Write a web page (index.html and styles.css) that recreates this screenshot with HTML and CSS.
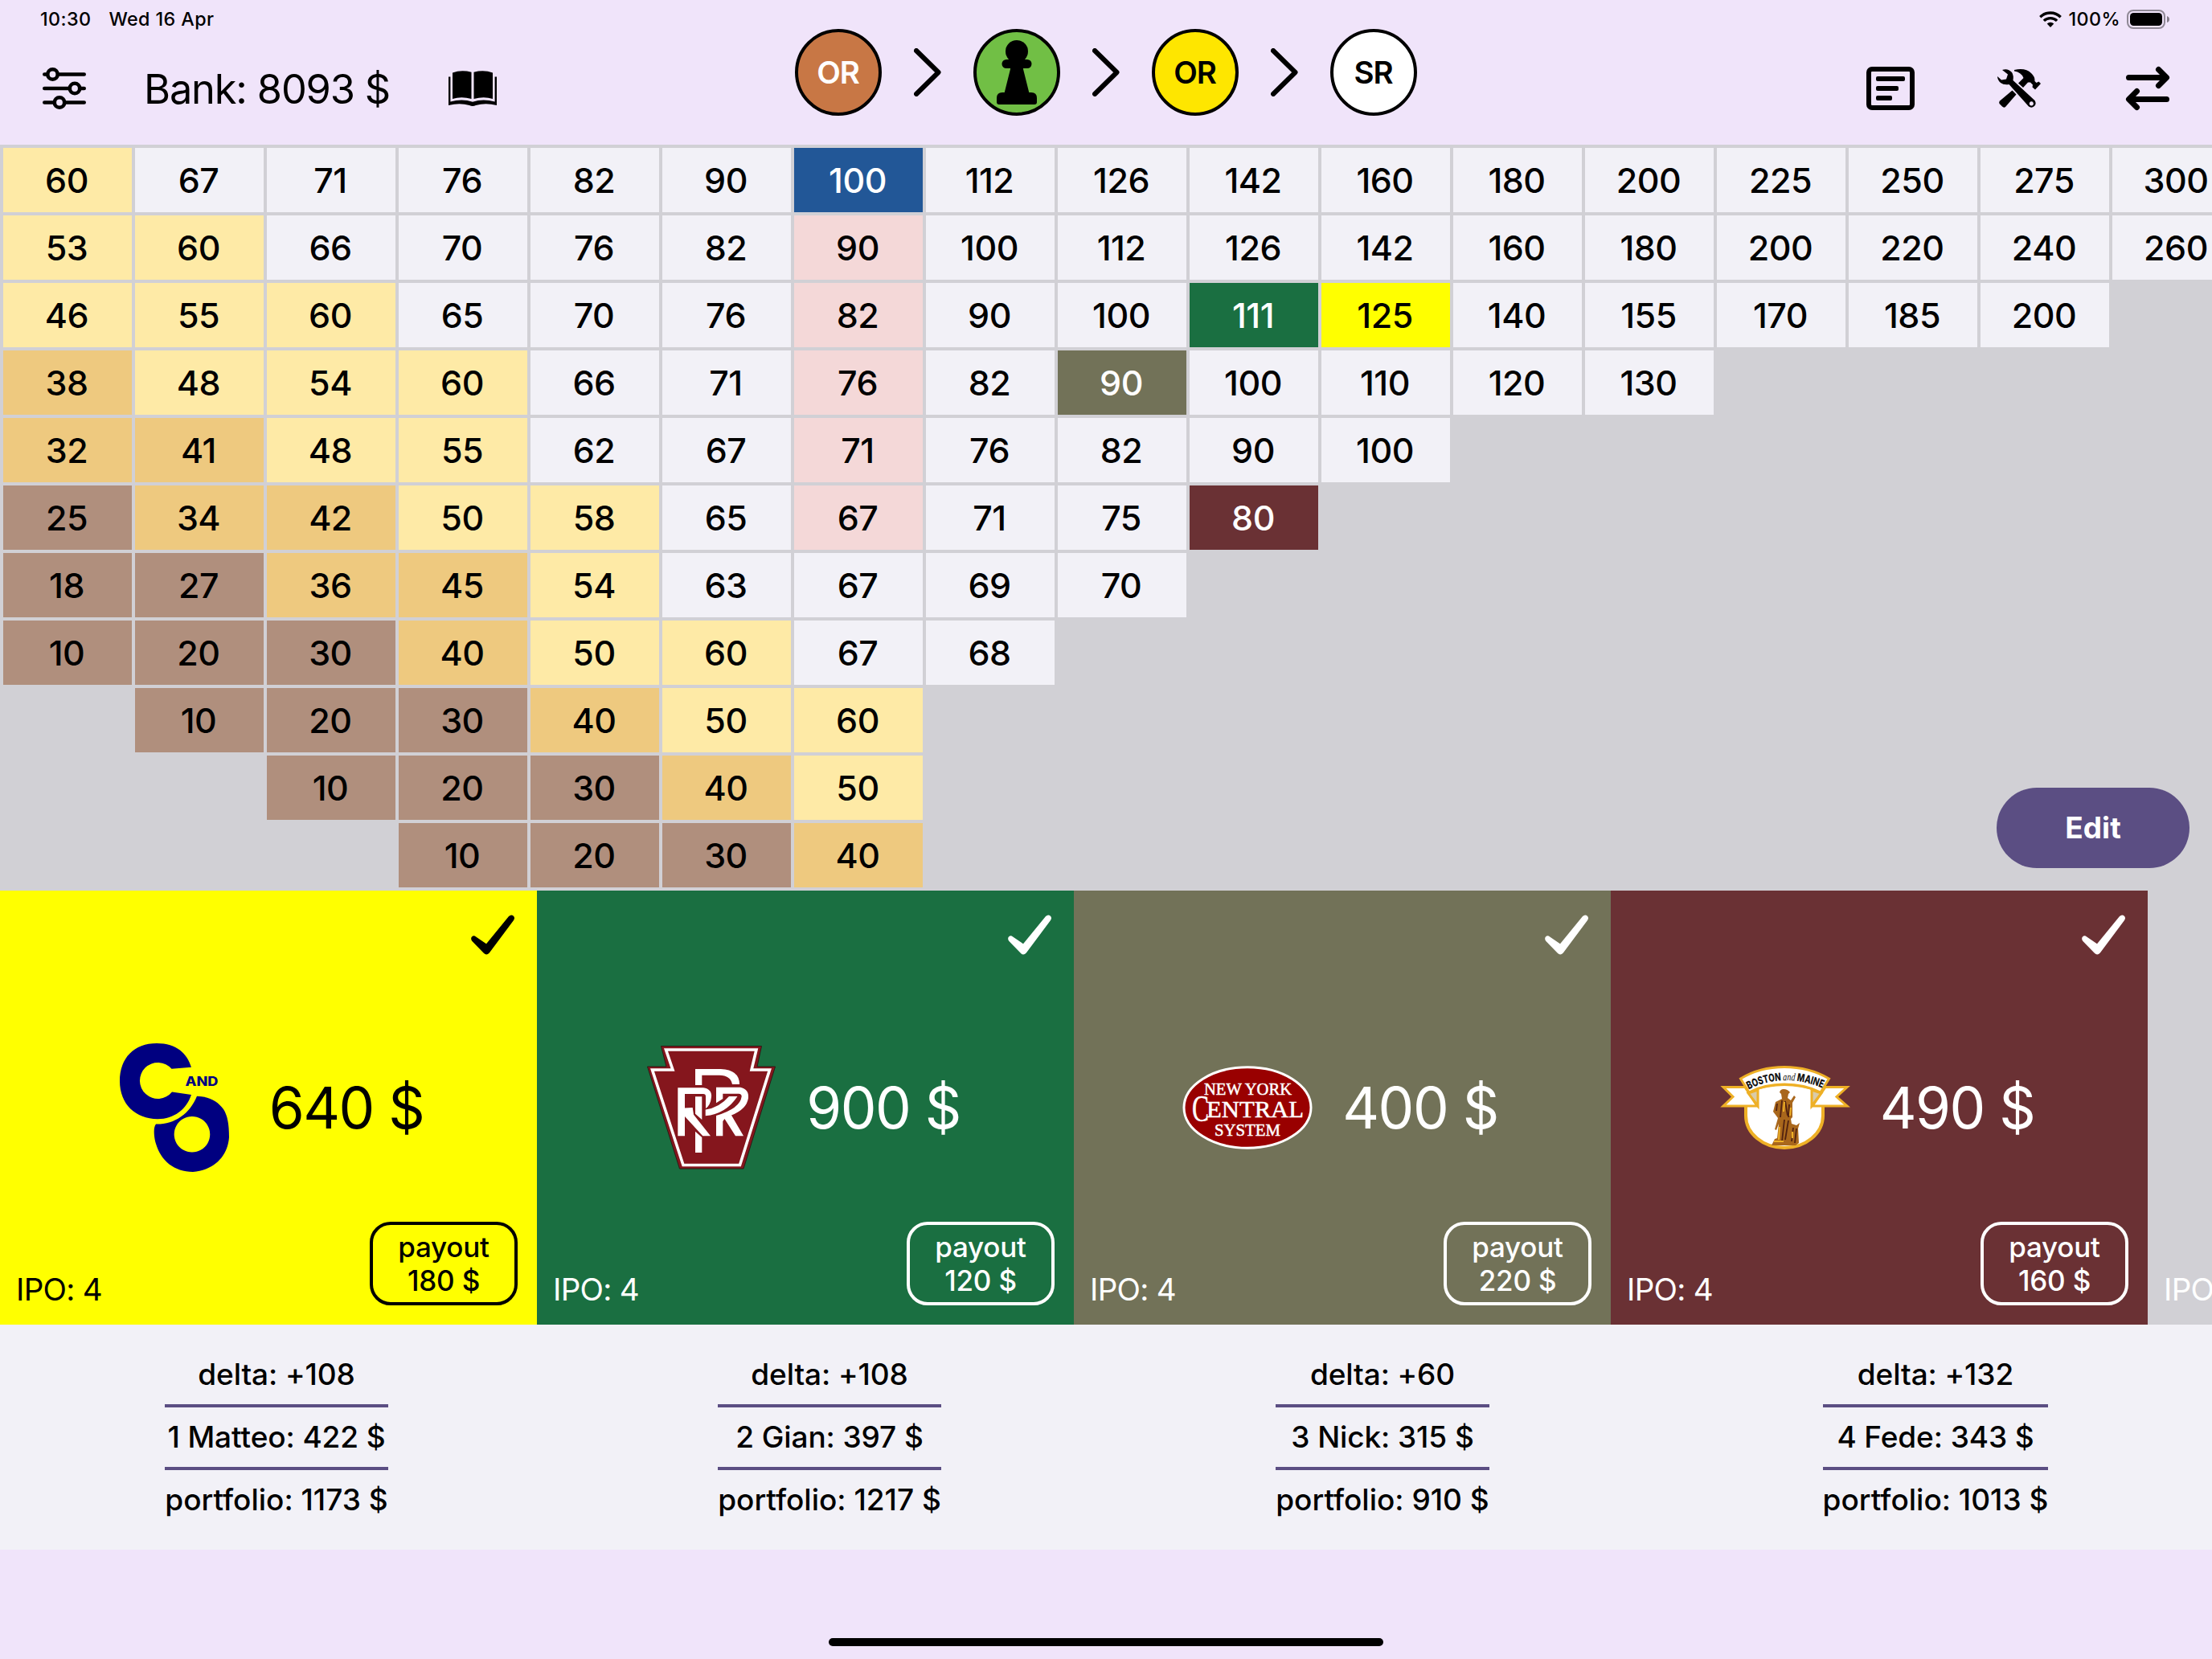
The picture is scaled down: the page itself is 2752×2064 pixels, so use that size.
FILE: index.html
```html
<!DOCTYPE html>
<html lang="en">
<head>
<meta charset="utf-8">
<title>Bank</title>
<link rel="stylesheet" href="styles.css">
</head>
<body>
<svg class="defs" width="0" height="0">
  <symbol id="check" viewBox="0 0 54 50"><path d="M6.2 27.6 L19 36.3 L47 2 Q50 -1 53 1.8 Q55 4 53 7 L22.8 47.5 Q19.300 51.500 15.800 47.800 L1.200 32.700 Q-0.800 29.800 1 27.500 Q3.400 25 6.200 27.600 Z" fill="currentColor"/></symbol>
  <symbol id="chevron" viewBox="0 0 34 60"><path d="M3 3 L30.500 30 L3 57" fill="none" stroke="#000" stroke-width="6" stroke-linecap="round" stroke-linejoin="round"/></symbol>
</svg>

<header class="topbar">
  <div class="status">
    <div class="status-side"><span class="time">10:30</span><span class="date">Wed 16 Apr</span></div>
    <div class="status-side">
      <svg class="wifi" viewBox="0 0 28 20"><g fill="none" stroke="#000" stroke-width="3.4"><path d="M1.300 7.200 A18.200 18.200 0 0 1 26.700 7.200"/><path d="M5.900 11.900 A11.600 11.600 0 0 1 22.100 11.900"/></g><path d="M14 20 L9.700 15.600 A6.200 6.200 0 0 1 18.300 15.600 Z"/></svg>
      <span class="pct">100%</span>
      <svg class="battery" viewBox="0 0 54 24"><rect x="1" y="1" width="46" height="22" rx="7" fill="none" stroke="#000" stroke-opacity=".4" stroke-width="2"/><rect x="4" y="4" width="40" height="16" rx="4.500"/><path d="M50 8 Q53 9 53 12 Q53 15 50 16 Z" fill-opacity=".45"/></svg>
    </div>
  </div>
  <div class="tools">
    <div class="tools-left">
      <svg class="sliders" viewBox="0 0 54 52"><g fill="none" stroke="#000" stroke-width="4.600" stroke-linecap="round"><path d="M2.300 8.500H5M20 8.500H51.700M2.300 26H33M48 26H51.700M2.300 43.500H14M28 43.500H51.700"/><circle cx="12.500" cy="8.500" r="6.200"/><circle cx="40" cy="26" r="6.200"/><circle cx="21" cy="43.500" r="6.200"/></g></svg>
      <span class="bank">Bank: 8093 $</span>
      <svg class="book" viewBox="0 0 60 44"><path d="M5 2.500 Q16 -1.500 28.500 1.800 V35 Q16 31.500 5 35 Z"/><path d="M55 2.500 Q44 -1.500 31.500 1.800 V35 Q44 31.500 55 35 Z"/><path d="M0 7.500 H2.400 V38.600 Q17 34.500 30 38.800 Q43 34.500 57.600 38.600 V7.500 H60 V43 Q46 39.500 34 43 Q30 44.800 26 43 Q14 39.500 0 43 Z"/></svg>
    </div>
    <div class="rounds">
      <div class="round r-brown">OR</div>
      <svg class="chev"><use href="#chevron"/></svg>
      <div class="round r-green"><svg class="pawn" viewBox="0 0 50 80"><ellipse cx="25" cy="14" rx="14" ry="14"/><rect x="6.500" y="24" width="37" height="11" rx="5.500"/><path d="M18 24 H32 L33 36 L40.500 66 H9.500 L17 36 Z"/><path d="M0 77 V72 Q0 65 7 65 H43 Q50 65 50 72 V77 Q50 80 47 80 H3 Q0 80 0 77 Z"/></svg></div>
      <svg class="chev"><use href="#chevron"/></svg>
      <div class="round r-yellow">OR</div>
      <svg class="chev"><use href="#chevron"/></svg>
      <div class="round r-white">SR</div>
    </div>
    <div class="tools-right">
      <svg class="note" viewBox="0 0 60 54"><rect x="3" y="3" width="54" height="48" rx="4" fill="none" stroke="#000" stroke-width="6"/><rect x="12" y="12" width="36" height="6" rx="2"/><rect x="12" y="24" width="28" height="6" rx="2"/><rect x="12" y="36" width="20" height="6" rx="2"/></svg>
      <svg class="wrench" viewBox="0 0 54 48"><path d="M21 1 Q35 -2 42 5 Q47 9.500 46.500 15 L48.500 17 L51.500 15.500 L54 18 L47 25.500 L43.500 22.500 L44 19.500 L41 16.500 L38 16.500 L32 23 L26 17.500 L32.500 11 Q30 4 21 2.500 Z"/><path d="M18.500 26.500 L23.500 31.500 L10 47 Q8 48.500 6 46.500 L2.500 43 Q1.500 41 3 39.500 Z"/><path fill-rule="evenodd" d="M6 1 Q13 -1.500 18 4 Q20.500 8 19.500 14 L46.500 39 Q49 43 46 46 Q42.500 49 39 46.500 L14.500 19 Q8 20 4 17 Q0 13.500 0 9 L5 13.500 L11 12.500 L13 6.500 Z M42.300 40.300 a2.600 2.600 0 1 0 .1 0 Z"/></svg>
      <svg class="swap" viewBox="0 0 54 54"><g fill="none" stroke="#000" stroke-width="7" stroke-linecap="round" stroke-linejoin="round"><path d="M3.500 13.500H50M40.500 3.500L50.500 13.500L40.500 23.500M50.500 40.500H4M13.500 30.500L3.500 40.500L13.500 50.500"/></g></svg>
    </div>
  </div>
</header>

<main class="market">
  <div class="row"><i class="y">60</i><i>67</i><i>71</i><i>76</i><i>82</i><i>90</i><i class="bo">100</i><i>112</i><i>126</i><i>142</i><i>160</i><i>180</i><i>200</i><i>225</i><i>250</i><i>275</i><i>300</i></div>
  <div class="row"><i class="y">53</i><i class="y">60</i><i>66</i><i>70</i><i>76</i><i>82</i><i class="par">90</i><i>100</i><i>112</i><i>126</i><i>142</i><i>160</i><i>180</i><i>200</i><i>220</i><i>240</i><i>260</i></div>
  <div class="row"><i class="y">46</i><i class="y">55</i><i class="y">60</i><i>65</i><i>70</i><i>76</i><i class="par">82</i><i>90</i><i>100</i><i class="prr">111</i><i class="co">125</i><i>140</i><i>155</i><i>170</i><i>185</i><i>200</i></div>
  <div class="row"><i class="o">38</i><i class="y">48</i><i class="y">54</i><i class="y">60</i><i>66</i><i>71</i><i class="par">76</i><i>82</i><i class="nyc">90</i><i>100</i><i>110</i><i>120</i><i>130</i></div>
  <div class="row"><i class="o">32</i><i class="o">41</i><i class="y">48</i><i class="y">55</i><i>62</i><i>67</i><i class="par">71</i><i>76</i><i>82</i><i>90</i><i>100</i></div>
  <div class="row"><i class="b">25</i><i class="o">34</i><i class="o">42</i><i class="y">50</i><i class="y">58</i><i>65</i><i class="par">67</i><i>71</i><i>75</i><i class="bm">80</i></div>
  <div class="row"><i class="b">18</i><i class="b">27</i><i class="o">36</i><i class="o">45</i><i class="y">54</i><i>63</i><i>67</i><i>69</i><i>70</i></div>
  <div class="row"><i class="b">10</i><i class="b">20</i><i class="b">30</i><i class="o">40</i><i class="y">50</i><i class="y">60</i><i>67</i><i>68</i></div>
  <div class="row"><i class="none"></i><i class="b">10</i><i class="b">20</i><i class="b">30</i><i class="o">40</i><i class="y">50</i><i class="y">60</i></div>
  <div class="row"><i class="none"></i><i class="none"></i><i class="b">10</i><i class="b">20</i><i class="b">30</i><i class="o">40</i><i class="y">50</i></div>
  <div class="row"><i class="none"></i><i class="none"></i><i class="none"></i><i class="b">10</i><i class="b">20</i><i class="b">30</i><i class="o">40</i></div>
  <button class="edit">Edit</button>
</main>

<section class="companies">
  <article class="card co">
    <svg class="tick"><use href="#check"/></svg>
    <div class="value">
      <svg class="logo" viewBox="0 0 160 160"><g fill="#000080"><path d="M101 29.800 C96 13 83 0 58 0 C30 0 12 18 12 47 C12 76 32 94 59 94.300 C80 94 95 82 101 64 L77 60.500 A22.500 22.500 0 1 1 76.500 31.800 Z"/><path fill-rule="evenodd" d="M108 65.700 C99 88 80 101 57 100.500 C53 105 55 119 57 125 C63 146 80 160 103 160 C128 158 146 142 148 117 C148 100 146 90 141 82 C134 72 123 66 108 65.700 Z M102 91 a22.300 22.300 0 1 1 -.1 0 Z"/><text x="93.500" y="53" textLength="41" lengthAdjust="spacingAndGlyphs" font-size="15.500" font-weight="800">AND</text></g></svg>
      <span class="amount">640 $</span>
    </div>
    <div class="foot"><span class="ipo">IPO: 4</span><span class="payout">payout<br>180 $</span></div>
  </article>
  <article class="card prr">
    <svg class="tick"><use href="#check"/></svg>
    <div class="value">
      <svg class="logo" viewBox="0 0 160 160"><path d="M17.500 3.500H142.500L137 29H159.500L120 156H40.500L.500 29H24Z" fill="#85161d" stroke="#2d1a16"/><path d="M23.500 8H136L130 33H152.500L115.500 151.500H45L6.500 33H32Z" fill="none" stroke="#fff" stroke-width="3.600"/>
      <g fill="#fff">
        <path d="M60 32H91.700Q115 33 115 51H106Q104 40 90 39.700H68.300V52H60Z"/>
        <path d="M38.300 55.300H70Q81 57 80 67Q79 77 73 81V66Q73 63 70 63H47V80.500L56.700 80L58 88.700L79 115.300H69.300L47 91V115.300H38.300Z"/>
        <path d="M60 66.300H68.300V95L60 87.700Z"/>
        <path d="M60 109.700L68.300 117V136H60Z"/>
        <path d="M72.700 90.300V82.500Q90 80 102 66H112.500Q98 88 72.700 90.300Z"/>
        <path d="M86 54.700H116Q127 57 126 68Q124 82 105 89.500L120 115.300H110L96.500 94L94.300 97V115.300H86V90Q116 81 117.700 66Q117.700 63 114 62.700H94.300V69L86 74.300Z"/>
      </g></svg>
      <span class="amount">900 $</span>
    </div>
    <div class="foot"><span class="ipo">IPO: 4</span><span class="payout">payout<br>120 $</span></div>
  </article>
  <article class="card nyc">
    <svg class="tick"><use href="#check"/></svg>
    <div class="value">
      <svg class="logo" viewBox="0 0 160 160"><ellipse cx="80" cy="80" rx="79" ry="50.300" fill="#900" stroke="#fff" stroke-width="3"/><g class="serif"><text x="26" y="64" font-size="21" textLength="109" lengthAdjust="spacingAndGlyphs">NEW YORK</text><text x="11" y="97" font-size="46" textLength="21" lengthAdjust="spacingAndGlyphs">C</text><text x="29" y="92" font-size="28.500" textLength="121" lengthAdjust="spacingAndGlyphs">ENTRAL</text><text x="39" y="115" font-size="21" textLength="82" lengthAdjust="spacingAndGlyphs">SYSTEM</text></g></svg>
      <span class="amount">400 $</span>
    </div>
    <div class="foot"><span class="ipo">IPO: 4</span><span class="payout">payout<br>220 $</span></div>
  </article>
  <article class="card bm">
    <svg class="tick"><use href="#check"/></svg>
    <div class="value">
      <svg class="logo" viewBox="0 0 160 160"><path d="M31 78V90A48 40 0 0 0 127 90V78L120 58Q79 44 38 58Z" fill="#fff" stroke="#eeb026" stroke-width="4"/><path d="M3 54.500H30L45 78H3L15 66.500ZM157 54.500H130L114 78H157L144 66.500Z" fill="#fff" stroke="#eeb026" stroke-width="3"/><path d="M34 62L46 58V78ZM125 62L113 58V78Z" fill="#d9cba8" stroke="#eeb026" stroke-width="3"/><path d="M24.500 44Q48 29.500 79 29.500Q110 29.500 134.500 44L124 61Q104 51 79 51Q54 51 35 61Z" fill="#fff" stroke="#eeb026" stroke-width="3"/>
      <path id="arc" d="M34.500 57.500Q80 34.500 132 58" fill="none"/><text font-size="13.500" font-weight="800" textLength="95" lengthAdjust="spacingAndGlyphs" class="ink"><textPath href="#arc">BOSTON <tspan font-style="italic" font-weight="500" font-family="Liberation Serif, serif">and</tspan> MAINE</textPath></text>
      <path d="M73 61Q74 57 78 57Q83 57 86 61L84 63L83 68L87 71L91 65L93 67L89 74V92L87 94L88 100L94 102L98 99L96 106L97 124L93 127H63L67 119L70 118L72 100L69 108L67 107L71 93L65 85L68 73L76 69L75 63Z" fill="#a9671c"/><path d="M76 71L74 92M80 72L83 90M85 76L84 92M79 95L76 122M84 96L80 120M90 105L88 122M94 106L92 124M70 75L69 84" stroke="#512210" stroke-width="1.800" fill="none"/><path d="M79 73L78 85M87 80L86 90M73 104L72 120M66 122H78M89 110V118" stroke="#eeb026" stroke-width="2" fill="none"/></svg>
      <span class="amount">490 $</span>
    </div>
    <div class="foot"><span class="ipo">IPO: 4</span><span class="payout">payout<br>160 $</span></div>
  </article>
  <article class="card next">
    <div class="foot"><span class="ipo">IPO: 4</span></div>
  </article>
</section>

<section class="players">
  <div class="player"><div class="lines"><span>delta: +108</span><span>1 Matteo: 422 $</span><span>portfolio: 1173 $</span></div></div>
  <div class="player"><div class="lines"><span>delta: +108</span><span>2 Gian: 397 $</span><span>portfolio: 1217 $</span></div></div>
  <div class="player"><div class="lines"><span>delta: +60</span><span>3 Nick: 315 $</span><span>portfolio: 910 $</span></div></div>
  <div class="player"><div class="lines"><span>delta: +132</span><span>4 Fede: 343 $</span><span>portfolio: 1013 $</span></div></div>
</section>
<footer class="home"><span class="home-bar"></span></footer>
</body>
</html>
```

FILE: styles.css
```css
* { box-sizing: border-box; }
body {
  margin: 0;
  width: 2752px;
  height: 2064px;
  overflow: hidden;
  display: flex;
  flex-direction: column;
  background: #f0e4fa;
  color: #000;
  font-family: Inter, "Liberation Sans", sans-serif;
}
svg { display: block; flex: none; overflow: visible; }
.defs { position: absolute; }

/* top bar */
.topbar { height: 180px; flex: none; }
.status {
  height: 48px;
  display: flex;
  justify-content: space-between;
  padding: 0 52px 0 50px;
  font-size: 23.300px;
  font-weight: 500;
  line-height: 48px;
  letter-spacing: .4px;
}
.status-side { display: flex; align-items: center; }
.date { margin-left: 22px; }
.wifi { width: 28px; height: 20px; }
.pct { margin: 0 8px 0 9px; }
.battery { width: 54px; height: 24px; }
.tools {
  height: 132px;
  display: grid;
  grid-template-columns: 989px 774px 989px;
}
.tools-left, .tools-right { display: flex; align-items: center; height: 124px; }
.tools-left { padding-left: 53px; }
.sliders { width: 54px; height: 52px; }
.bank { margin-left: 72px; width: 309px; font-size: 50.500px; white-space: nowrap; letter-spacing: -1.150px; }
.book { width: 60px; height: 44px; margin-left: 70px; }
.rounds { display: flex; align-items: center; justify-content: space-between; height: 108px; margin-top: -12px; }
.round {
  width: 108px;
  height: 108px;
  border: 4px solid #000;
  border-radius: 50%;
  display: flex;
  align-items: center;
  justify-content: center;
  padding-right: 1px;
  font-size: 38.500px;
  font-weight: 600;
  letter-spacing: -1px;
}
.r-brown { background: #c87745; color: #fff; }
.r-green { background: #71bf45; padding: 0; }
.r-yellow { background: #fee600; }
.r-white { background: #fff; }
.pawn { width: 50px; height: 80px; }
.chev { width: 34px; height: 60px; }
.tools-right { justify-content: flex-end; padding-right: 53px; }
.note { width: 60px; height: 54px; margin-right: 103px; }
.wrench { width: 54px; height: 48px; margin-right: 106px; }
.swap { width: 54px; height: 54px; }

/* stock market */
.market {
  position: relative;
  height: 928px;
  flex: none;
  padding: 4px;
  display: flex;
  flex-direction: column;
  gap: 4px;
  background: #d1d0d5;
  overflow: hidden;
}
.row { display: flex; gap: 4px; flex: none; }
.row i {
  width: 160px;
  height: 80px;
  flex: none;
  display: flex;
  align-items: center;
  justify-content: center;
  padding-right: 2px;
  background: #f2f1f7;
  font-style: normal;
  font-size: 43px;
  font-weight: 500;
  letter-spacing: -.5px;
}
.row .y { background: #feeaa6; }
.row .o { background: #eec97f; }
.row .b { background: #b08f7d; }
.row .par { background: #f4d8d8; }
.row .none { background: none; }
.row .bo { background: #225797; color: #fff; }
.co, .row .co { background: #ff0; color: #000; }
.prr, .row .prr { background: #1a6f41; color: #fff; }
.nyc, .row .nyc { background: #727258; color: #fff; }
.bm, .row .bm { background: #6a3134; color: #fff; }
.edit {
  position: absolute;
  right: 28px;
  bottom: 28px;
  width: 240px;
  height: 100px;
  padding: 0 0 2px;
  border: 0;
  border-radius: 50px;
  background: #5b4e83;
  color: #fff;
  font: 700 37px Inter, "Liberation Sans", sans-serif;
}

/* companies */
.companies { height: 540px; flex: none; display: flex; background: #d1d0d5; overflow: hidden; }
.card {
  width: 668px;
  height: 540px;
  flex: none;
  padding: 30px 24px 24px 20px;
  display: grid;
  grid-template-rows: 50px 1fr 104px;
}
.tick { width: 54px; height: 50px; justify-self: end; margin-right: 4px; }
.value { display: flex; align-items: center; justify-content: center; padding-top: 48px; }
.logo { width: 160px; height: 160px; }
.amount { margin-left: 38px; font-size: 71px; white-space: nowrap; letter-spacing: -1.500px; }
.serif { font-family: "Liberation Serif", serif; fill: #fff; stroke: #fff; stroke-width: .5px; }
.ink { fill: #111; }
.foot { grid-row: 3; display: flex; align-items: flex-end; justify-content: space-between; }
.ipo { font-size: 38.500px; line-height: 40px; white-space: nowrap; letter-spacing: -.7px; }
.next { color: #fff; }
.payout {
  width: 184px;
  height: 104px;
  border: 4px solid;
  border-radius: 26px;
  padding-top: 6px;
  text-align: center;
  font-size: 35px;
  font-weight: 500;
  line-height: 42px;
  letter-spacing: -.2px;
}

/* players */
.players { height: 280px; flex: none; display: flex; background: #f2f1f7; }
.player { flex: 1; display: flex; justify-content: center; padding-top: 25px; }
.lines span { display: block; height: 78px; line-height: 74px; text-align: center; font-size: 37px; font-weight: 500; letter-spacing: -.1px; white-space: nowrap; border-bottom: 4px solid #5b4e83; }
.lines span:last-child { border: 0; letter-spacing: 0; }
.home { flex: 1; display: flex; align-items: flex-end; justify-content: center; padding-bottom: 16px; }
.home-bar { width: 690px; height: 10px; border-radius: 5px; background: #000; }
```
